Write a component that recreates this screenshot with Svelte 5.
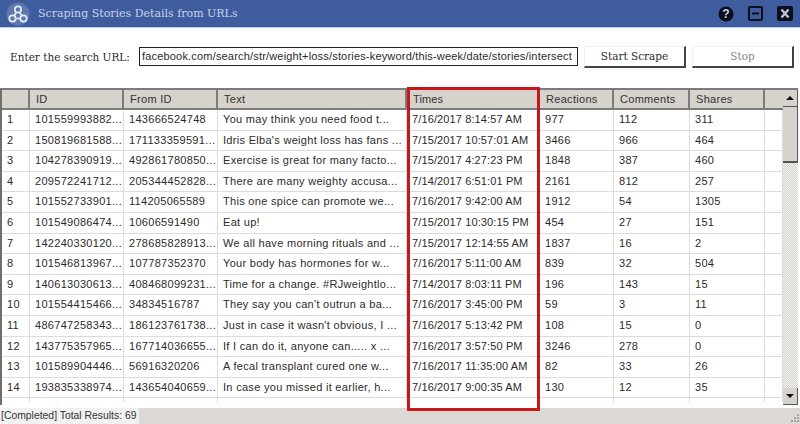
<script>
  const url = "facebook.com/search/str/weight+loss/stories-keyword/this-week/date/stories/intersect";
  const columns = ["", "ID", "From ID", "Text", "Times", "Reactions", "Comments", "Shares", ""];
  const rows = [
    ["101559993882...", "143666524748", "You may think you need food t...", "7/16/2017 8:14:57 AM", "977", "112", "311"],
    ["150819681588...", "171133359591...", "Idris Elba's weight loss has fans ...", "7/15/2017 10:57:01 AM", "3466", "966", "464"],
    ["104278390919...", "492861780850...", "Exercise is great for many facto...", "7/15/2017 4:27:23 PM", "1848", "387", "460"],
    ["209572241712...", "205344452828...", "There are many weighty accusa...", "7/14/2017 6:51:01 PM", "2161", "812", "257"],
    ["101552733901...", "114205065589", "This one spice can promote we...", "7/16/2017 9:42:00 AM", "1912", "54", "1305"],
    ["101549086474...", "10606591490", "Eat up!", "7/15/2017 10:30:15 PM", "454", "27", "151"],
    ["142240330120...", "278685828913...", "We all have morning rituals and ...", "7/15/2017 12:14:55 AM", "1837", "16", "2"],
    ["101546813967...", "107787352370", "Your body has hormones for w...", "7/16/2017 5:11:00 AM", "839", "32", "504"],
    ["140613030613...", "408468099231...", "Time for a change. #RJweightlo...", "7/14/2017 8:03:11 PM", "196", "143", "15"],
    ["101554415466...", "34834516787", "They say you can't outrun a ba...", "7/16/2017 3:45:00 PM", "59", "3", "11"],
    ["486747258343...", "186123761738...", "Just in case it wasn't obvious, I ...", "7/16/2017 5:13:42 PM", "108", "15", "0"],
    ["143775357965...", "167714036655...", "If I can do it, anyone can..... x ...", "7/16/2017 3:57:50 PM", "3246", "278", "0"],
    ["101589904446...", "56916320206", "A fecal transplant cured one w...", "7/16/2017 11:35:00 AM", "82", "33", "26"],
    ["193835338974...", "143654040659...", "In case you missed it earlier, h...", "7/16/2017 9:00:35 AM", "130", "12", "35"],
  ];
</script>

<div class="window">
  <header class="titlebar">
    <svg class="logo" width="24" height="24" viewBox="0 0 24 24">
      <circle cx="12" cy="12" r="11.5" fill="#5d78b0" />
      <path d="M12 7.5 L6.5 16.5 L17.5 16.5 Z" fill="none" stroke="#e8edf5" stroke-width="1.6" />
      <circle cx="12" cy="7.5" r="3.2" fill="#5d78b0" stroke="#e8edf5" stroke-width="1.7" />
      <circle cx="6.5" cy="16.5" r="3.2" fill="#5d78b0" stroke="#e8edf5" stroke-width="1.7" />
      <circle cx="17.5" cy="16.5" r="3.2" fill="#5d78b0" stroke="#e8edf5" stroke-width="1.7" />
    </svg>
    <span class="title">Scraping Stories Details from URLs</span>
    <div class="winbtns">
      <svg width="16" height="16" viewBox="0 0 16 16">
        <circle cx="8" cy="8" r="7.5" fill="#0b0f1c" />
        <text x="8" y="12" text-anchor="middle" class="q">?</text>
      </svg>
      <svg width="15" height="15" viewBox="0 0 15 15">
        <rect x="1" y="1" width="13" height="13" rx="1" fill="none" stroke="#0b0f1c" stroke-width="2" />
        <path d="M4 7.5 H11" stroke="#0b0f1c" stroke-width="2" />
      </svg>
      <svg width="16" height="15" viewBox="0 0 16 15">
        <rect width="16" height="15" rx="2" fill="#0b0f1c" />
        <path d="M4.5 3.5 L11.5 11.5 M11.5 3.5 L4.5 11.5" stroke="#b9c3d8" stroke-width="2.4" />
      </svg>
    </div>
  </header>

  <div class="toolbar">
    <span class="label">Enter the search URL:</span>
    <div class="input">{url}</div>
    <div class="btn">Start Scrape</div>
    <div class="btn disabled">Stop</div>
  </div>

  <div class="tablewrap">
    <div class="grid">
      <div class="row head">
        {#each columns as col}
          <div class="cell">{col}</div>
        {/each}
      </div>
      {#each rows as row, i}
        <div class="row">
          <div class="cell">{i + 1}</div>
          {#each row as value}
            <div class="cell">{value}</div>
          {/each}
          <div class="cell"></div>
        </div>
      {/each}
      <div class="row stub">
        {#each columns as col}
          <div class="cell"></div>
        {/each}
      </div>
    </div>
    <div class="scrollbar">
      <div class="arrow"><span class="up"></span></div>
      <div class="thumb"></div>
      <div class="track"></div>
      <div class="arrow"><span class="down"></span></div>
    </div>
  </div>

  <footer class="status">
    <span class="statustext">[Completed] Total Results: 69</span>
    <svg class="grip" width="12" height="12" viewBox="0 0 12 12" fill="#a9a59f">
      <rect x="9" y="2" width="2" height="2" /><rect x="6" y="5" width="2" height="2" />
      <rect x="9" y="5" width="2" height="2" /><rect x="3" y="8" width="2" height="2" />
      <rect x="6" y="8" width="2" height="2" /><rect x="9" y="8" width="2" height="2" />
    </svg>
  </footer>

  <div class="highlight"></div>
</div>

<style>
  :global(body) {
    background: #fff;
  }

  .window {
    position: relative;
    width: 800px;
    height: 424px;
    display: flex;
    flex-direction: column;
    overflow: hidden;
    background: #fff;
    font-family: "Liberation Sans", sans-serif;
    font-size: 11px;
    color: #2b2b2b;
  }

  .titlebar {
    height: 27px;
    flex: none;
    display: flex;
    align-items: center;
    padding: 0 7px 0 6px;
    background: #3e5c9e;
    border-bottom: 1px solid #b9cbe8;
  }

  .logo {
    flex: none;
  }

  .title {
    margin-left: 8px;
    font-family: "DejaVu Serif", serif;
    font-size: 11px;
    color: #c9d3e8;
  }

  .winbtns {
    margin-left: auto;
    display: flex;
    align-items: center;
    gap: 14px;
  }

  .q {
    font-family: "Liberation Sans", sans-serif;
    font-size: 12px;
    font-weight: bold;
    fill: #c9d3e8;
  }

  .toolbar {
    height: 59px;
    flex: none;
    display: flex;
    align-items: center;
    padding: 0 6px 2px 10px;
    box-sizing: border-box;
  }

  .label {
    width: 129px;
    flex: none;
    font-family: "DejaVu Serif", serif;
    font-size: 10.5px;
  }

  .input {
    width: 439px;
    height: 19px;
    flex: none;
    box-sizing: border-box;
    border: 1px solid #222;
    padding: 0 2px;
    line-height: 17px;
    overflow: hidden;
    white-space: nowrap;
    letter-spacing: 0.18px;
  }

  .btn {
    width: 102px;
    height: 22px;
    flex: none;
    margin-left: 6px;
    box-sizing: border-box;
    border-top: 1px solid #f0f0f0;
    border-left: 1px solid #f0f0f0;
    border-right: 2px solid #444;
    border-bottom: 2px solid #444;
    text-align: center;
    line-height: 19px;
    font-family: "DejaVu Serif", serif;
    font-size: 10.5px;
  }

  .btn.disabled {
    color: #8a8a8a;
  }

  .tablewrap {
    height: 317px;
    flex: none;
    margin: 1px 2px 0 0;
    display: flex;
    box-sizing: border-box;
    border-top: 2px solid #7c7c7c;
    border-left: 2px solid #6e6e6e;
  }

  .grid {
    flex: 1;
    min-width: 0;
    overflow: hidden;
    letter-spacing: 0.3px;
  }

  .row {
    display: grid;
    grid-template-columns: 28px 94px 94px 189px 133px 74px 76px 75px 18px;
    height: 20.6px;
    border-bottom: 1px solid #dcdcdc;
    box-sizing: border-box;
  }

  .cell {
    padding-left: 5px;
    line-height: 18px;
    white-space: nowrap;
    overflow: hidden;
    border-right: 1px solid #dcdcdc;
  }

  .cell:nth-child(5) {
    letter-spacing: 0.12px;
  }

  .head {
    height: 20px;
    background: #d6d2cc;
    border-bottom: 2px solid #7c7c7c;
  }

  .head .cell {
    padding-left: 6px;
    line-height: 18px;
    color: #333;
    border-right: 2px solid #7c7c7c;
  }

  .head .cell:last-child {
    border-right: none;
  }

  .stub {
    height: 4px;
    border-bottom: none;
  }

  .scrollbar {
    width: 15px;
    flex: none;
    display: flex;
    flex-direction: column;
    background: #fff;
  }

  .arrow {
    height: 16px;
    flex: none;
    display: flex;
    align-items: center;
    justify-content: center;
    background: #d6d2cc;
    border-right: 1px solid #555;
    border-bottom: 1px solid #555;
  }

  .up,
  .down {
    width: 0;
    height: 0;
    border-left: 4px solid transparent;
    border-right: 4px solid transparent;
  }

  .up {
    border-bottom: 4px solid #111;
  }

  .down {
    border-top: 4px solid #111;
  }

  .thumb {
    height: 56px;
    flex: none;
    background: #d6d2cc;
    border-right: 1px solid #555;
    border-bottom: 2px solid #555;
    box-sizing: border-box;
  }

  .track {
    flex: 1;
    background: repeating-conic-gradient(#d6d2cc 0 25%, #f4f3f1 0 50%) 0 0 / 2px 2px;
  }

  .status {
    margin-top: auto;
    height: 16px;
    flex: none;
    display: flex;
    align-items: stretch;
    justify-content: space-between;
    background: #dcd8d4;
  }

  .statustext {
    width: 139px;
    box-sizing: border-box;
    padding-left: 1px;
    font-size: 10.4px;
    line-height: 16px;
    background: #f1f1f1;
    color: #333;
    white-space: nowrap;
  }

  .grip {
    align-self: flex-end;
  }

  .highlight {
    position: absolute;
    left: 407px;
    top: 87px;
    width: 133px;
    height: 324px;
    box-sizing: border-box;
    border: 3px solid #c8161d;
    pointer-events: none;
  }
</style>
